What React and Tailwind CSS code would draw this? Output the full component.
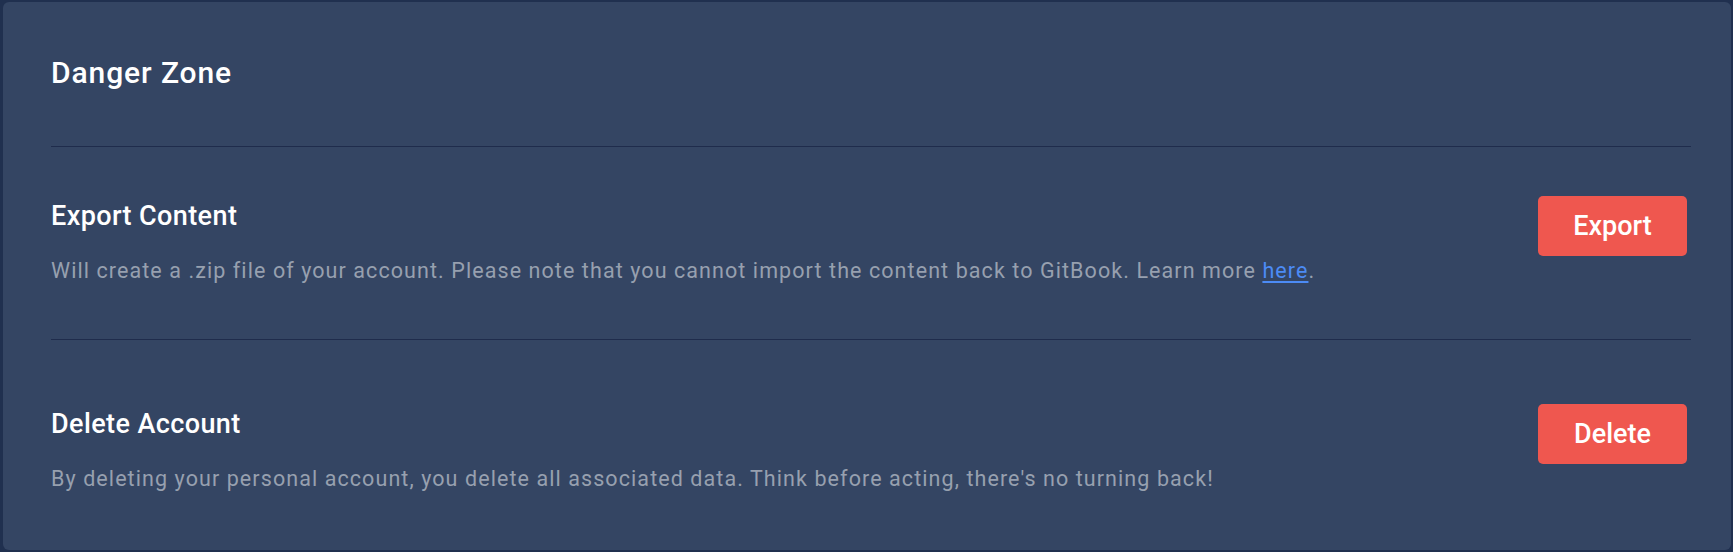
import React from 'react';

const sections = [
  {
    id: 'export',
    title: 'Export Content',
    action: 'Export',
    top: 'pt-[49px]',
    bottom: 'pb-[54px]',
    body: (
      <>
        Will create a .zip file of your account. Please note that you cannot import the content back to GitBook. Learn more{' '}
        <a href="#" className="text-[#4c8bf5] underline underline-offset-[3px]">here</a>.
      </>
    ),
  },
  {
    id: 'delete',
    title: 'Delete Account',
    action: 'Delete',
    top: 'pt-[64px]',
    bottom: 'pb-[55px]',
    body: "By deleting your personal account, you delete all associated data. Think before acting, there's no turning back!",
  },
];

const DangerZone = () => {
  return (
    <div className="rounded-md bg-[#344563] h-full pt-[53px] pl-[48px] pr-[40px]">
      {/* Header */}
      <h2 className="text-[30px] leading-[36px] font-medium tracking-[0.9px] text-white">Danger Zone</h2>

      <div className="mt-[55px]">
        {sections.map((section, i) => (
          <div
            key={section.id}
            className={`border-t border-[#1f2c4c] ${section.top} ${i < sections.length - 1 ? section.bottom : ''}`}
          >
            <div className="flex justify-between items-start">
              <div className="pt-[4px]">
                <h3 className="text-[27px] leading-[32px] font-medium tracking-[0.4px] text-white">{section.title}</h3>
                <p className="mt-[25px] text-[21.5px] leading-[28px] tracking-[1.08px] text-[#97a0af]">{section.body}</p>
              </div>
              <button className="w-[149px] h-[60px] mr-[4px] rounded-[5px] bg-[#ef574f] text-white text-[27px] font-medium shrink-0">
                {section.action}
              </button>
            </div>
          </div>
        ))}
      </div>
    </div>
  );
};

export default function App() {
  return (
    <div className="w-full h-[552px] bg-[#20304f] pt-[2px] pb-[2px] pl-[3px] pr-[2px]" style={{ fontFamily: 'Roboto, sans-serif' }}>
      <DangerZone />
    </div>
  );
}
